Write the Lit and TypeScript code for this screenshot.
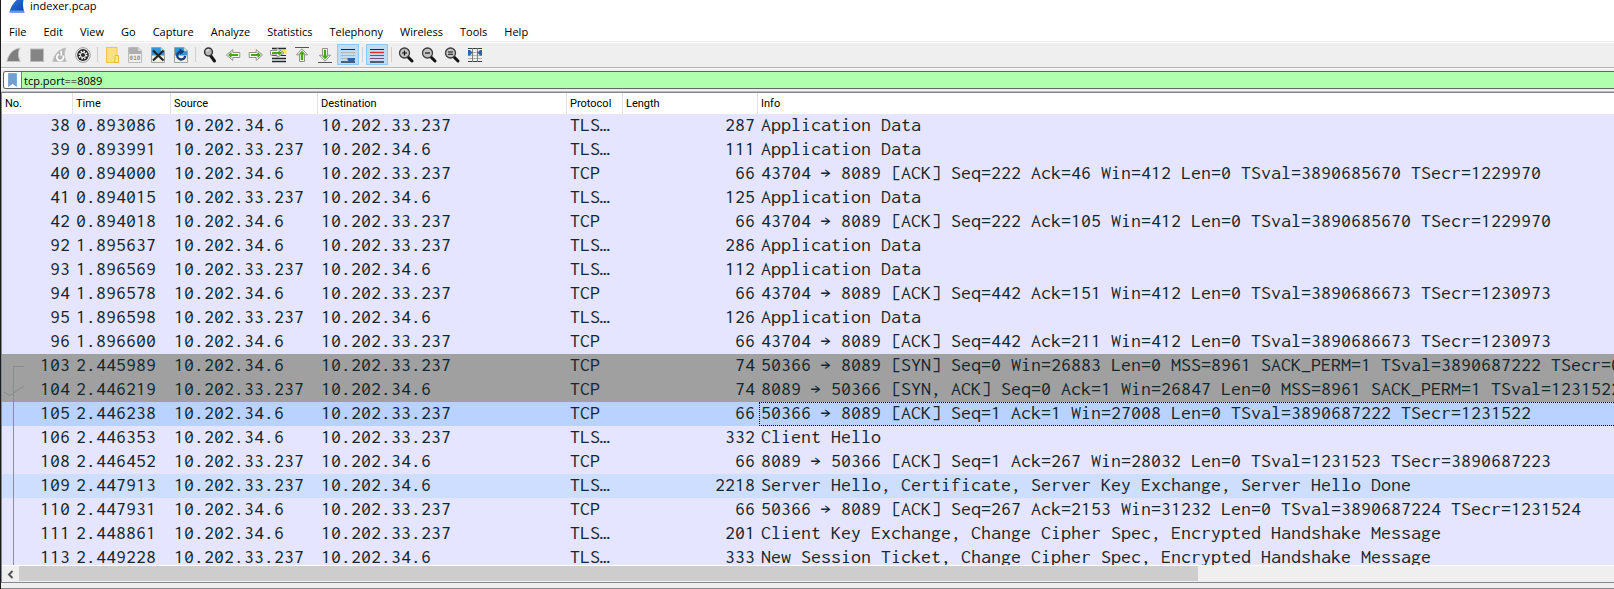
import { LitElement, html, svg, css, nothing } from "lit";
import { customElement, property } from "lit/decorators.js";
import { classMap } from "lit/directives/class-map.js";

interface Packet {
  no: number;
  time: string;
  src: string;
  dst: string;
  proto: string;
  len: number;
  info: string;
  kind?: "syn" | "selected" | "related";
  link?: "start" | "ack" | "line";
}

const CLIENT = "10.202.34.6";
const SERVER = "10.202.33.237";

const packet = (
  no: number, time: string, fromClient: boolean, proto: string, len: number, info: string,
  kind?: Packet["kind"], link?: Packet["link"],
): Packet => ({
  no, time, proto, len, info, kind, link,
  src: fromClient ? CLIENT : SERVER,
  dst: fromClient ? SERVER : CLIENT,
});

const PACKETS: Packet[] = [
  packet(38, "0.893086", true, "TLS…", 287, "Application Data"),
  packet(39, "0.893991", false, "TLS…", 111, "Application Data"),
  packet(40, "0.894000", true, "TCP", 66, "43704 → 8089 [ACK] Seq=222 Ack=46 Win=412 Len=0 TSval=3890685670 TSecr=1229970"),
  packet(41, "0.894015", false, "TLS…", 125, "Application Data"),
  packet(42, "0.894018", true, "TCP", 66, "43704 → 8089 [ACK] Seq=222 Ack=105 Win=412 Len=0 TSval=3890685670 TSecr=1229970"),
  packet(92, "1.895637", true, "TLS…", 286, "Application Data"),
  packet(93, "1.896569", false, "TLS…", 112, "Application Data"),
  packet(94, "1.896578", true, "TCP", 66, "43704 → 8089 [ACK] Seq=442 Ack=151 Win=412 Len=0 TSval=3890686673 TSecr=1230973"),
  packet(95, "1.896598", false, "TLS…", 126, "Application Data"),
  packet(96, "1.896600", true, "TCP", 66, "43704 → 8089 [ACK] Seq=442 Ack=211 Win=412 Len=0 TSval=3890686673 TSecr=1230973"),
  packet(103, "2.445989", true, "TCP", 74, "50366 → 8089 [SYN] Seq=0 Win=26883 Len=0 MSS=8961 SACK_PERM=1 TSval=3890687222 TSecr=0", "syn", "start"),
  packet(104, "2.446219", false, "TCP", 74, "8089 → 50366 [SYN, ACK] Seq=0 Ack=1 Win=26847 Len=0 MSS=8961 SACK_PERM=1 TSval=1231522", "syn", "ack"),
  packet(105, "2.446238", true, "TCP", 66, "50366 → 8089 [ACK] Seq=1 Ack=1 Win=27008 Len=0 TSval=3890687222 TSecr=1231522", "selected", "line"),
  packet(106, "2.446353", true, "TLS…", 332, "Client Hello", undefined, "line"),
  packet(108, "2.446452", false, "TCP", 66, "8089 → 50366 [ACK] Seq=1 Ack=267 Win=28032 Len=0 TSval=1231523 TSecr=3890687223", undefined, "line"),
  packet(109, "2.447913", false, "TLS…", 2218, "Server Hello, Certificate, Server Key Exchange, Server Hello Done", "related", "line"),
  packet(110, "2.447931", true, "TCP", 66, "50366 → 8089 [ACK] Seq=267 Ack=2153 Win=31232 Len=0 TSval=3890687224 TSecr=1231524", undefined, "line"),
  packet(111, "2.448861", true, "TLS…", 201, "Client Key Exchange, Change Cipher Spec, Encrypted Handshake Message", undefined, "line"),
  packet(113, "2.449228", false, "TLS…", 333, "New Session Ticket, Change Cipher Spec, Encrypted Handshake Message", undefined, "line"),
];

const MENUS = ["File", "Edit", "View", "Go", "Capture", "Analyze", "Statistics", "Telephony", "Wireless", "Tools", "Help"];

const lens = svg`
  <path d="M9.5 9.5L14 14" stroke="#111" stroke-width="3" stroke-linecap="round"/>
  <circle cx="6.5" cy="6" r="5" fill="#c4c4c4" stroke="#3c3c3c" stroke-width="1.3"/>`;
const rightArrow = svg`
  <path d="M1.2 5.5h7V2.6L14.6 8l-6.4 5.400v-2.900h-7z" fill="#fff" stroke="#909090" stroke-linejoin="round"/>
  <path d="M3 7h6.500V4.800L13 8l-3.500 3.200V9H3z" fill="#47a80c"/>`;
const page = svg`
  <path d="M1.500 .5h9.500l3.500 3.500v11.500h-13z" fill="#f3f1dc" stroke="#9aa3a8"/>
  <path d="M2 1h9v3h3v4.500H2z" fill="#2f97d8"/>
  <path d="M11 .5V4h3.500z" fill="#e9eef2" stroke="#a5b4bd" stroke-width=".6"/>`;

const ICONS: Record<string, unknown> = {
  start: svg`<path d="M.8 14.500C2.500 7 7 1.800 13.800 1.200C11.800 5.500 12 10 14.300 14.500z" fill="#7e7e7e" stroke="#c6c6c6"/>`,
  stop: svg`<rect x="1.500" y="2" width="13" height="12.500" fill="#858585" stroke="#bcbcbc"/>`,
  restart: svg`
    <path d="M.8 14.500C2.500 7 7 1.800 13.800 1.200C11.800 5.500 12 10 14.300 14.500z" fill="#b4b4b4" stroke="#c6c6c6"/>
    <path d="M7 7.200a3.300 3.300 0 1 0 4 1.500M9.300 3.800v5" fill="none" stroke="#fff" stroke-width="1.700"/>`,
  options: svg`
    <circle cx="8" cy="8" r="7.300" fill="#fff" stroke="#8b8b8b" stroke-width=".9"/>
    <circle cx="8" cy="8" r="5.900" fill="#262626"/>
    <circle cx="8" cy="8" r="3.700" fill="none" stroke="#fff" stroke-width="1.500" stroke-dasharray="1.500 1.406"/>
    <circle cx="8" cy="8" r="2.900" fill="#fff"/><circle cx="8" cy="8" r="2" fill="#262626"/>`,
  open: svg`
    <path d="M2.500 .5h10.500v15h-10.500z" fill="#fde084" stroke="#eec54c"/>
    <path d="M11 8.500h3.500v7h-4.500l1-1.500z" fill="#ffe795" stroke="#eabb35"/>`,
  save: svg`
    <path d="M1.500 .5h9.500l3.500 3.500v11.500h-13z" fill="#efefef" stroke="#bbb"/>
    <path d="M2 1h9v3h3v3H2z" fill="#aeaeae"/><path d="M11 .5V4h3.500z" fill="#eee" stroke="#bbb" stroke-width=".6"/>
    <text x="8" y="13" text-anchor="middle" font-family="DejaVu Sans Mono, monospace" font-weight="700" font-size="6" fill="#929292">010</text>`,
  close: svg`${page}<path d="M3 3.500l10.500 10M13.500 3.500L3 13.500" stroke="#202428" stroke-width="2.200"/>`,
  reload: svg`${page}<path d="M8.300 4.500A4 4 0 1 0 12.200 9" fill="none" stroke="#153d80" stroke-width="2.300"/><path d="M6.500 1.500l5 3-4.500 3.500z" fill="#153d80"/>`,
  find: svg`
    <path d="M8.500 8.500l4 5.500" stroke="#151515" stroke-width="3" stroke-linecap="round"/>
    <circle cx="6.500" cy="5" r="3.900" fill="#b9b9b9" stroke="#333" stroke-width="1.500"/><path d="M4.500 4.500a2.500 2.500 0 0 1 2.500-2" stroke="#fff" fill="none"/>`,
  back: svg`<g transform="matrix(-1 0 0 1 16 0)">${rightArrow}</g>`,
  forward: rightArrow,
  goto: svg`
    <path d="M1 1.500h14M1 11.500h14M1 14.500h14" stroke="#23292b" stroke-width="1.400"/><path d="M1 8.500h14" stroke="#23292b"/>
    <rect x="11" y="3" width="4.500" height="4" fill="#fbe64d"/>
    <path d="M-.5 3.500h6.500V1L13 6l-7 4.500V8h-6.500z" fill="#fff" stroke="#909090"/><path d="M1 5h6.500V3.300L11.500 6 7.500 8.500V7H1z" fill="#47a80c"/>`,
  first: svg`
    <path d="M1 .5h14" stroke="#555"/>
    <path d="M8 1.800l5.500 6h-3v6.700h-5v-6.700h-3z" fill="#fff" stroke="#909090" stroke-linejoin="round"/>
    <path d="M8 3.800l3 3.500H9v5.700H7V7.300H5z" fill="#47a80c" stroke="#47a80c" stroke-width=".4"/>`,
  last: svg`
    <path d="M1 15.500h14" stroke="#555"/>
    <path d="M8 14.200l5.500-6h-3V1.500h-5v6.700h-3z" fill="#fff" stroke="#909090" stroke-linejoin="round"/>
    <path d="M8 12.200l3-3.500H9V3H7v5.700H5z" fill="#47a80c" stroke="#47a80c" stroke-width=".4"/>`,
  autoscroll: svg`
    <path d="M1 2.500h14" stroke="#23292b"/><path d="M1 5.500h14M1 8.500h14M1 11.500h14" stroke="#b4b6ae"/>
    <path d="M1 15h14" stroke="#23292b" stroke-width="1.400"/><path d="M7.500 11h7.500v2l-2.500 2.500h-2.500l-2.500-2.500z" fill="#2e62ad"/>`,
  colorize: svg`
    <path d="M1 2.500h14" stroke="#23292b"/><path d="M1 5.500h14" stroke="#ef2929" stroke-width="1.400"/>
    <path d="M1 8.500h14" stroke="#3465a4"/><path d="M1 11.500h14" stroke="#75507b"/><path d="M1 15h14" stroke="#23292b" stroke-width="1.400"/>`,
  zoomin: svg`${lens}<path d="M4 6h5M6.500 3.500v5" stroke="#111" stroke-width="1.200"/>`,
  zoomout: svg`${lens}<path d="M4 6h5" stroke="#111" stroke-width="1.200"/>`,
  zoomreset: svg`${lens}<path d="M4 5h5M4 7.300h5" stroke="#111" stroke-width="1.100"/>`,
  resize: svg`
    <path d="M1 5.500h14M1 8.500h14M1 11.500h14" stroke="#b4b6ae"/><path d="M1 1.500h14M1 14.500h14" stroke="#3a3f40" stroke-width="1.200"/>
    <path d="M5.500 1v14M10.500 1v14" stroke="#7b7f7d"/>
    <path d="M1 3h2l2.500 2.500L3 8.500H1zM15 3h-2l-2.500 2.500 2.500 3h2z" fill="#2e62ad"/>`,
};

const TOOLBAR: { id: string; label: string; on?: boolean }[][] = [
  [
    { id: "start", label: "Start capture" }, { id: "stop", label: "Stop capture" },
    { id: "restart", label: "Restart capture" }, { id: "options", label: "Capture options" },
  ],
  [
    { id: "open", label: "Open file" }, { id: "save", label: "Save file" },
    { id: "close", label: "Close file" }, { id: "reload", label: "Reload file" },
  ],
  [
    { id: "find", label: "Find packet" }, { id: "back", label: "Previous packet" }, { id: "forward", label: "Next packet" },
    { id: "goto", label: "Go to packet" }, { id: "first", label: "First packet" }, { id: "last", label: "Last packet" },
    { id: "autoscroll", label: "Auto scroll", on: true },
  ],
  [{ id: "colorize", label: "Colorize packets", on: true }],
  [
    { id: "zoomin", label: "Zoom in" }, { id: "zoomout", label: "Zoom out" },
    { id: "zoomreset", label: "Normal size" }, { id: "resize", label: "Resize columns" },
  ],
];

@customElement("tool-bar")
class ToolBar extends LitElement {
  static styles = css`
    :host { display: flex; gap: 1px; padding: 1px 2px 2px; background: #efefef; border-bottom: 1px solid #b4b4b4; }
    .tool {
      display: flex; align-items: flex-end; justify-content: center; box-sizing: border-box;
      width: 22px; height: 21px; padding: 0 0 1px; border: 1px solid transparent; background: none;
    }
    .tool.on { background: #c0dcf3; border-color: #90c8f6; }
    .icon { display: block; width: 16px; height: 16px; flex: none; overflow: visible; }
    .sep { width: 1px; margin: 3px 2px; background: #d0d0d0; }
  `;
  render() {
    return TOOLBAR.map((group, i) => html`
      ${i ? html`<span class="sep"></span>` : nothing}
      ${group.map((t) => html`
        <button class=${classMap({ tool: true, on: !!t.on })} aria-label=${t.label}>
          <svg class="icon" viewBox="0 0 16 16">${ICONS[t.id]}</svg>
        </button>`)}`);
  }
}

@customElement("packet-list")
class PacketList extends LitElement {
  @property({ attribute: false }) packets: Packet[] = [];

  static styles = css`
    :host { display: flex; flex-direction: column; min-height: 0; border: 1px solid #828790; border-right: 0; background: #fff; }
    .view { flex: 1; min-height: 0; overflow: hidden; border-bottom: 1px solid #fff; }
    table { width: 100%; table-layout: fixed; border-collapse: separate; border-spacing: 0; }
    .c-no { width: 71px; } .c-time { width: 98px; } .c-src { width: 147px; } .c-dst { width: 249px; }
    .c-proto { width: 56px; } .c-len { width: 135px; }
    th {
      box-sizing: border-box; height: 21px; padding: 0 3px; text-align: left; background: #fff; color: #000;
      border-right: 1px solid #e2e2e2; font: 400 11px/21px Roboto, "Noto Sans", sans-serif;
    }
    th:last-child { border-right: 0; }
    td {
      height: 24px; padding: 0 3px; color: #12272e; background: #e6e5ff; white-space: pre; overflow: hidden;
      vertical-align: top; font: 20px/22px Inconsolata, "Liberation Mono", monospace;
    }
    .num { text-align: right; }
    .syn td { background: #a0a0a0; }
    .selected td { background: #b9d2ff; }
    .related td { background: #cedeff; }
    .no { position: relative; }
    .link { position: absolute; left: 0; top: 0; width: 24px; height: 24px; fill: none; stroke: #8a8f9c; }
    .syn .link { stroke: #858d8d; }
    td.info { padding: 0 0 0 1px; }
    .cell { box-sizing: border-box; height: 24px; padding-left: 2px; overflow: hidden; }
    .selected .cell { padding-left: 1px; border: 1px dotted #000; border-right: 0; line-height: 20px; }
    .scroll { display: flex; height: 16px; background: #efefef; }
    .arrow { width: 17px; height: 16px; padding: 0; border: 0; background: #efefef; }
    .arrow svg { display: block; margin: 0 auto; }
    .track { flex: 1; }
    .thumb { height: 15px; background: #cdcdcd; }
  `;

  private link(kind: Packet["link"]) {
    if (!kind) return nothing;
    const d = {
      start: "M22 12.500H11.500V24",
      ack: "M11.500 0V24M2 14l6 3.500 14-9.500",
      line: "M11.500 0V24",
    }[kind];
    return html`<svg class="link" viewBox="0 0 24 24"><path d=${d} /></svg>`;
  }

  render() {
    return html`
      <div class="view">
        <table>
          <colgroup>
            <col class="c-no" /><col class="c-time" /><col class="c-src" /><col class="c-dst" />
            <col class="c-proto" /><col class="c-len" /><col />
          </colgroup>
          <thead>
            <tr>${["No.", "Time", "Source", "Destination", "Protocol", "Length", "Info"].map((h) => html`<th scope="col">${h}</th>`)}</tr>
          </thead>
          <tbody>
            ${this.packets.map((p) => html`
              <tr class=${p.kind ?? ""}>
                <td class="no num">${this.link(p.link)}${p.no}</td>
                <td>${p.time}</td>
                <td>${p.src}</td>
                <td>${p.dst}</td>
                <td>${p.proto}</td>
                <td class="num">${p.len}</td>
                <td class="info"><div class="cell">${p.info}</div></td>
              </tr>`)}
          </tbody>
        </table>
      </div>
      <div class="scroll">
        <button class="arrow" aria-label="Scroll left">
          <svg width="9" height="9" viewBox="0 0 9 9"><path d="M6.500 1L3 4.500 6.500 8" fill="none" stroke="#505050" stroke-width="1.900" /></svg>
        </button>
        <div class="track"><div class="thumb" style="width:73.9%"></div></div>
      </div>`;
  }
}

@customElement("app-root")
class AppRoot extends LitElement {
  static styles = css`
    :host {
      display: flex; flex-direction: column; box-sizing: border-box; height: 100vh; overflow: hidden;
      border-left: 1px solid #1c1c1c; background: #efefef; color: #000;
      font: 11px/16px "Open Sans", "Noto Sans", sans-serif;
    }
    .title { display: flex; gap: 5px; height: 22px; padding-left: 8px; background: #fff; line-height: 12px; }
    .fin { width: 16px; height: 13px; }
    .menu { display: flex; gap: 17px; height: 19px; padding-left: 8px; background: #fff; border-bottom: 1px solid #ececec; }
    .menu button { padding: 0; border: 0; background: none; color: inherit; font: inherit; line-height: 19px; }
    tool-bar { border-top: 1px solid #fff; }
    .filterbar { padding: 2px 0 2px 2px; border-top: 1px solid #fafafa; }
    .filter {
      display: flex; box-sizing: border-box; height: 18px; overflow: hidden;
      border: 1px solid #646464; border-right: 0; border-radius: 3px 0 0 3px; background: #afffaf;
    }
    .mark { display: flex; justify-content: center; align-items: center; width: 18px; padding: 0; border: 0; border-right: 1px solid #777; background: #fff; }
    .filter input { flex: 1; min-width: 0; padding: 1px 2px 0; border: 0; outline: 0; background: #afffaf; color: #000; font: inherit; }
    packet-list { flex: 1; }
    .gap { height: 1px; background: #bdbdbd; }
    .splitter { height: 5px; border-bottom: 1px solid #828790; }
  `;
  render() {
    return html`
      <header class="title">
        <svg class="fin" viewBox="0 0 16 13">
          <defs><linearGradient id="g" x1="0" y1="0" x2="1" y2="1"><stop offset="0" stop-color="#2d7fe0" /><stop offset="1" stop-color="#0b3fae" /></linearGradient></defs>
          <path d="M.5 12.500C1.500 7 5 1 10.500-2H15c-1.500 5-1.200 10 .5 14.500z" fill="url(#g)" />
          <path d="M.5 12.500L1.200 10.500h13.400l.7 2z" fill="#5f9ae6" />
        </svg>
        <span>indexer.pcap</span>
      </header>
      <nav class="menu">${MENUS.map((m) => html`<button>${m}</button>`)}</nav>
      <tool-bar></tool-bar>
      <div class="filterbar">
        <div class="filter">
          <button class="mark" aria-label="Bookmarks">
            <svg width="9" height="14" viewBox="0 0 9 14"><path d="M.5.5h8v13l-4-3-4 3z" fill="#729fcf" stroke="#5f8dc0" stroke-width=".6" /></svg>
          </button>
          <input type="text" aria-label="Display filter" value="tcp.port==8089" />
        </div>
      </div>
      <div class="gap"></div>
      <packet-list .packets=${PACKETS}></packet-list>
      <div class="splitter"></div>`;
  }
}
